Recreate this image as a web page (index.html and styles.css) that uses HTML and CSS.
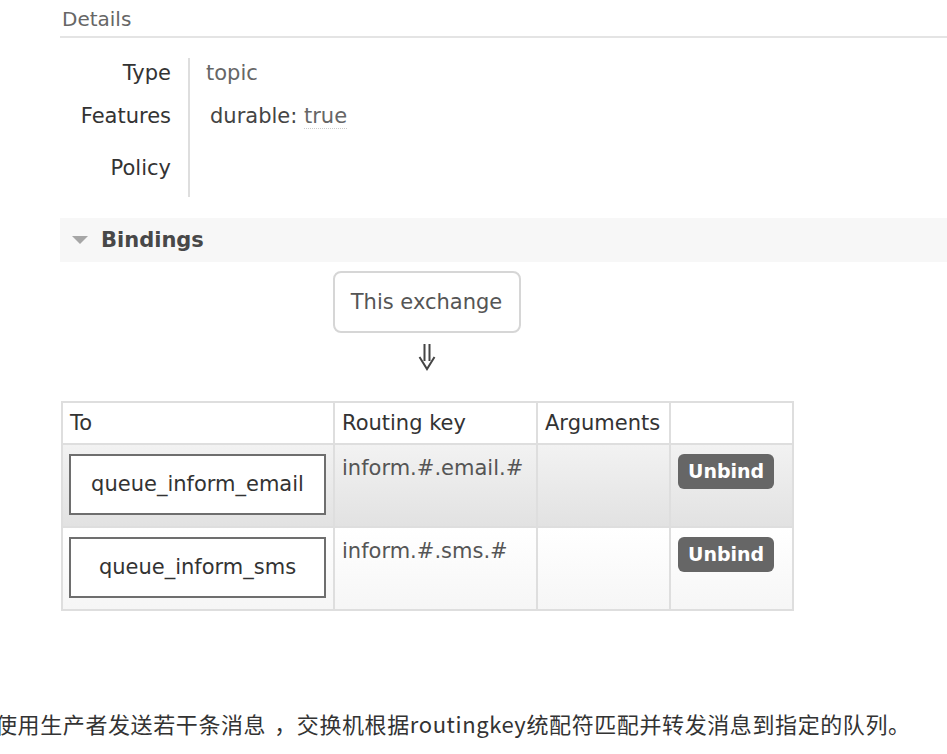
FILE: index.html
```html
<!DOCTYPE html>
<html lang="zh-CN">
<head>
<meta charset="utf-8">
<title>Exchange details</title>
<link rel="stylesheet" href="styles.css">
</head>
<body>
<div class="page">
  <h2 class="section-title">Details</h2>
  <table class="facts">
    <tr class="r1"><th>Type</th><td class="muted">topic</td></tr>
    <tr class="r2"><th>Features</th><td><span class="feat">durable: <abbr class="val">true</abbr></span></td></tr>
    <tr class="r3"><th>Policy</th><td></td></tr>
  </table>

  <div class="section-bar"><span class="tri"></span>Bindings</div>

  <div class="bindings">
    <div class="flow">
      <div class="exchange">This exchange</div>
      <svg class="arrow" width="20" height="27" viewBox="0 0 20 27" aria-label="⇓">
        <path d="M7.5 0 V17 M12.5 0 V17 M2.5 13 L10 25 L17.5 13" fill="none" stroke="#454545" stroke-width="2"/>
      </svg>
    </div>
    <table class="list">
      <colgroup>
        <col class="c1"><col class="c2"><col class="c3"><col class="c4">
      </colgroup>
      <thead>
        <tr><th>To</th><th>Routing key</th><th>Arguments</th><th></th></tr>
      </thead>
      <tbody>
        <tr class="alt1">
          <td class="to"><span class="queue">queue_inform_email</span></td>
          <td class="key">inform.#.email.#</td>
          <td></td>
          <td class="act"><span class="btn">Unbind</span></td>
        </tr>
        <tr class="alt2">
          <td class="to"><span class="queue">queue_inform_sms</span></td>
          <td class="key">inform.#.sms.#</td>
          <td></td>
          <td class="act"><span class="btn">Unbind</span></td>
        </tr>
      </tbody>
    </table>
  </div>
</div>
<p class="note">使用生产者发送若干条消息<span class="comma">，</span>交换机根据routingkey统配符匹配并转发消息到指定的队列。</p>
</body>
</html>
```

FILE: styles.css
```css
html, body {
  margin: 0;
  padding: 0;
  background: #fff;
}
body {
  font-family: "DejaVu Sans", Verdana, sans-serif;
  font-size: 21px;
  color: #333;
  overflow: hidden;
}
.page {
  padding-left: 60px;
}
.section-title {
  margin: 0;
  padding: 7px 0 5px 2px;
  font-size: 20px;
  line-height: 24px;
  font-weight: normal;
  color: #666;
  border-bottom: 2px solid #e4e4e4;
}
.facts {
  margin-top: 20px;
  border-collapse: collapse;
  border-spacing: 0;
}
.facts th, .facts td {
  line-height: 25px;
  vertical-align: top;
  padding: 0;
}
.facts th {
  width: 111px;
  text-align: right;
  font-weight: normal;
  color: #333;
  padding-right: 17px;
}
.facts td {
  border-left: 2px solid #dedede;
  padding-left: 16px;
  color: #444;
}
.facts .r1 th, .facts .r1 td { padding-top: 3px; padding-bottom: 18px; }
.facts .r2 th, .facts .r2 td { padding-bottom: 27px; }
.facts .r3 th, .facts .r3 td { padding-bottom: 16px; }
.facts td.muted { color: #666; }
.feat { margin-left: 4px; }
.val {
  color: #666;
  text-decoration: none;
  border-bottom: 1px dotted #ccc;
}
.section-bar {
  margin-top: 21px;
  height: 44px;
  line-height: 44px;
  background: #f7f7f7;
  padding-left: 12px;
  font-weight: bold;
  color: #484848;
  display: flex;
  align-items: center;
}
.tri {
  width: 0;
  height: 0;
  border-left: 8px solid transparent;
  border-right: 8px solid transparent;
  border-top: 8px solid #a6a6a6;
  margin-right: 13px;
}
.bindings {
  width: 731px;
  margin-left: 1px;
}
.flow {
  display: flex;
  flex-direction: column;
  align-items: center;
  padding-top: 9px;
}
.exchange {
  box-sizing: border-box;
  width: 188px;
  height: 62px;
  line-height: 58px;
  text-align: center;
  border: 2px solid #d6d6d6;
  border-radius: 8px;
  color: #555;
}
.arrow {
  display: block;
  margin-top: 11px;
}
.list {
  margin-top: 30px;
  width: 731px;
  table-layout: fixed;
  border-collapse: collapse;
  border: 2px solid #dedede;
}
.list col.c1 { width: 272px; }
.list col.c2 { width: 203px; }
.list col.c3 { width: 133px; }
.list col.c4 { width: 123px; }
.list th, .list td {
  border: 2px solid #dedede;
}
.list th {
  height: 40px;
  padding: 0 7px;
  text-align: left;
  font-weight: normal;
  color: #333;
  vertical-align: middle;
  background: #fff;
}
.list td {
  height: 83px;
  box-sizing: border-box;
  vertical-align: top;
  padding: 9px 7px 0;
}
.list tr.alt1 td { background: linear-gradient(#f2f2f2, #e2e2e2); }
.list tr.alt2 td { background: linear-gradient(#ffffff, #f6f6f6); }
.list td.to { padding-left: 6px; }
.queue {
  display: block;
  box-sizing: border-box;
  width: 257px;
  height: 61px;
  line-height: 57px;
  text-align: center;
  background: #fff;
  border: 2px solid #6e6e6e;
  color: #333;
}
.list td.key {
  color: #555;
  line-height: 25px;
  padding-top: 11px;
}
.btn {
  display: inline-block;
  height: 35px;
  line-height: 35px;
  padding: 0 10px;
  background: #666;
  color: #fff;
  font-size: 19px;
  font-weight: bold;
  border-radius: 6px;
}
.note {
  margin: 97px 0 0 -5px;
  font-family: "Noto Sans CJK SC", "Noto Sans", sans-serif;
  font-size: 22px;
  line-height: 30px;
  letter-spacing: 0.6px;
  color: #333;
  white-space: nowrap;
}
.comma {
  padding-left: 8px;
}
```
